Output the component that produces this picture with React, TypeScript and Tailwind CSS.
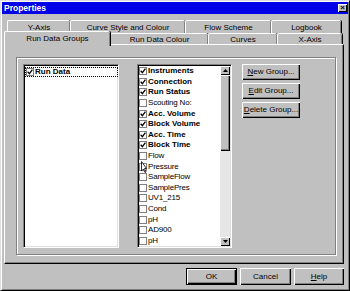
const font = { fontFamily: '"Liberation Sans", Arial, sans-serif' };

const runDataItems = [
  { label: "Instruments", on: true },
  { label: "Connection", on: true },
  { label: "Run Status", on: true },
  { label: "Scouting No:", on: false },
  { label: "Acc. Volume", on: true },
  { label: "Block Volume", on: true },
  { label: "Acc. Time", on: true },
  { label: "Block Time", on: true },
  { label: "Flow", on: false },
  { label: "Pressure", on: false },
  { label: "SampleFlow", on: false },
  { label: "SamplePres", on: false },
  { label: "UV1_215", on: false },
  { label: "Cond", on: false },
  { label: "pH", on: false },
  { label: "AD900", on: false },
  { label: "pH", on: false },
];

const backTabs = [
  { label: "Y-Axis", w: "w-[63px]" },
  { label: "Curve Style and Colour", w: "w-[115px]" },
  { label: "Flow Scheme", w: "w-[86px]" },
  { label: "Logbook", w: "w-[70px]" },
];

const frontTabs = [
  { label: "Run Data Colour", w: "w-[98px]" },
  { label: "Curves", w: "w-[69px]" },
  { label: "X-Axis", w: "w-[65px]" },
];

function Check({ on }: { on: boolean }) {
  return (
    <span className="flex h-[8px] w-[8px] shrink-0 items-center justify-center border border-[#808080] bg-white">
      {on && (
        <svg viewBox="0 0 7 7" className="h-[6px] w-[6px]">
          <path d="M0.8 3.2 L2.8 5.4 L6.3 0.8" stroke="black" strokeWidth="1.5" fill="none" />
        </svg>
      )}
    </span>
  );
}

function Button({ children, isDefault }: { children: React.ReactNode; isDefault?: boolean }) {
  return (
    <div
      className={`flex h-full items-center justify-center bg-[#c0c0c0] text-[8px] text-black ${
        isDefault
          ? "border border-black shadow-[inset_1px_1px_#fff,inset_-1px_-1px_#000,inset_-2px_-2px_#808080]"
          : "shadow-[inset_1px_1px_#fff,inset_-1px_-1px_#000,inset_-2px_-2px_#808080]"
      }`}
    >
      {children}
    </div>
  );
}

export default function App() {
  return (
    <div
      style={font}
      className="flex h-[291px] w-[350px] flex-col overflow-hidden border border-b-black border-l-[#dfdfdf] border-r-black border-t-[#dfdfdf] bg-[#c0c0c0] p-[1px] shadow-[inset_1px_1px_#fff,inset_-1px_-1px_#808080]"
    >
      {/* title bar */}
      <div className="flex h-[12px] shrink-0 items-center justify-between bg-[#0000e8] pl-[2px] pr-[1px]">
        <span className="text-[8.5px] font-bold leading-none text-white">Properties</span>
        <span className="flex h-[8px] w-[9px] items-center justify-center bg-[#c0c0c0] text-[8px] font-bold leading-none text-black shadow-[inset_1px_1px_#fff,inset_-1px_-1px_#000]">
          ×
        </span>
      </div>

      {/* back tab row */}
      <div className="ml-[5px] mt-[6px] flex h-[13px] shrink-0">
        {backTabs.map((t) => (
          <div
            key={t.label}
            className={`${t.w} flex items-start justify-center rounded-t-[2px] border-l border-t border-l-white border-t-white pt-[2px] text-[8px] leading-[10px] shadow-[inset_-1px_0_#808080,1px_0_#000]`}
          >
            {t.label}
          </div>
        ))}
      </div>

      {/* front tab row */}
      <div className="-mt-[2px] ml-[2px] flex h-[14px] shrink-0 items-end">
        <div className="relative z-10 flex h-[15px] w-[106px] items-start justify-center self-start rounded-t-[2px] border-l border-t border-l-white border-t-white bg-[#c0c0c0] pt-[2px] text-[8px] leading-[10px] shadow-[inset_-1px_0_#808080,1px_0_#000]">
          Run Data Groups
        </div>
        {frontTabs.map((t) => (
          <div
            key={t.label}
            className={`${t.w} flex h-[12px] items-start justify-center rounded-t-[2px] border-l border-t border-l-white border-t-white bg-[#c0c0c0] pt-[1px] text-[8px] leading-[10px] shadow-[inset_-1px_0_#808080,1px_0_#000]`}
          >
            {t.label}
          </div>
        ))}
      </div>

      {/* tab panel */}
      <div className="-mt-[1px] ml-[2px] h-[220px] w-[340px] shrink-0 border border-b-black border-l-white border-r-black border-t-white bg-[#c0c0c0] pl-[11px] pt-[12px] shadow-[inset_-1px_-1px_#808080]">
        <div className="flex h-[198px] w-[320px] items-start border border-[#808080] pl-[6px] pt-[6px] shadow-[1px_1px_#fff,inset_1px_1px_#fff]">
          {/* groups list */}
          <div className="h-[184px] w-[96px] border border-b-white border-l-[#808080] border-r-white border-t-[#808080] bg-white shadow-[inset_1px_1px_#000,inset_-1px_-1px_#dfdfdf]">
            <div className="ml-[1px] mt-[2px] flex h-[10px] items-center gap-[1px] border border-dotted border-black text-[8px] font-bold">
              <Check on />
              <span>Run Data</span>
            </div>
          </div>

          {/* items list */}
          <div className="relative ml-[18px] flex h-[184px] w-[95px] border border-b-white border-l-[#808080] border-r-white border-t-[#808080] bg-white p-[1px] shadow-[inset_1px_1px_#000,inset_-1px_-1px_#dfdfdf]">
            <div className="flex flex-1 flex-col">
              {runDataItems.map((item, i) => (
                <div
                  key={i}
                  className={`flex h-[10.6px] items-center gap-[1px] text-[8px] ${
                    item.on ? "font-bold" : "tracking-[-0.2px]"
                  }`}
                >
                  <Check on={item.on} />
                  <span>{item.label}</span>
                </div>
              ))}
            </div>
            {/* scrollbar */}
            <div className="flex w-[10px] flex-col bg-[#e6e6e6]">
              <div className="flex h-[9px] items-center justify-center bg-[#c0c0c0] shadow-[inset_1px_1px_#fff,inset_-1px_-1px_#000]">
                <svg viewBox="0 0 5 3" className="h-[3px] w-[5px]">
                  <path d="M2.5 0 L5 3 L0 3 Z" fill="black" />
                </svg>
              </div>
              <div className="h-[76px] bg-[#c0c0c0] shadow-[inset_1px_1px_#fff,inset_-1px_-1px_#000,inset_-2px_-2px_#808080]" />
              <div className="flex-1" />
              <div className="flex h-[9px] items-center justify-center bg-[#c0c0c0] shadow-[inset_1px_1px_#fff,inset_-1px_-1px_#000]">
                <svg viewBox="0 0 5 3" className="h-[3px] w-[5px]">
                  <path d="M0 0 L5 0 L2.5 3 Z" fill="black" />
                </svg>
              </div>
            </div>
            {/* mouse pointer over Pressure */}
            <svg viewBox="0 0 6 12" className="absolute left-[3px] top-[96px] h-[12px] w-[6px]">
              <path d="M0.5 0.5 L0.5 10 L2.5 8 L4 11.5 L5 11 L3.5 7.5 L5.5 7.5 Z" fill="white" stroke="black" strokeWidth="0.8" />
            </svg>
          </div>

          {/* group buttons */}
          <div className="ml-[10px] flex w-[58px] flex-col gap-[3px]">
            <div className="h-[16px]">
              <Button>
                <span><u>N</u>ew Group...</span>
              </Button>
            </div>
            <div className="h-[16px]">
              <Button>
                <span><u>E</u>dit Group...</span>
              </Button>
            </div>
            <div className="h-[16px]">
              <Button>
                <span><u>D</u>elete Group...</span>
              </Button>
            </div>
          </div>
        </div>
      </div>

      {/* dialog buttons */}
      <div className="mr-[4px] mt-[4px] flex justify-end gap-[3px]">
        <div className="h-[17px] w-[51px]">
          <Button isDefault>OK</Button>
        </div>
        <div className="h-[17px] w-[51px]">
          <Button>Cancel</Button>
        </div>
        <div className="h-[17px] w-[50px]">
          <Button>
            <span><u>H</u>elp</span>
          </Button>
        </div>
      </div>
    </div>
  );
}
